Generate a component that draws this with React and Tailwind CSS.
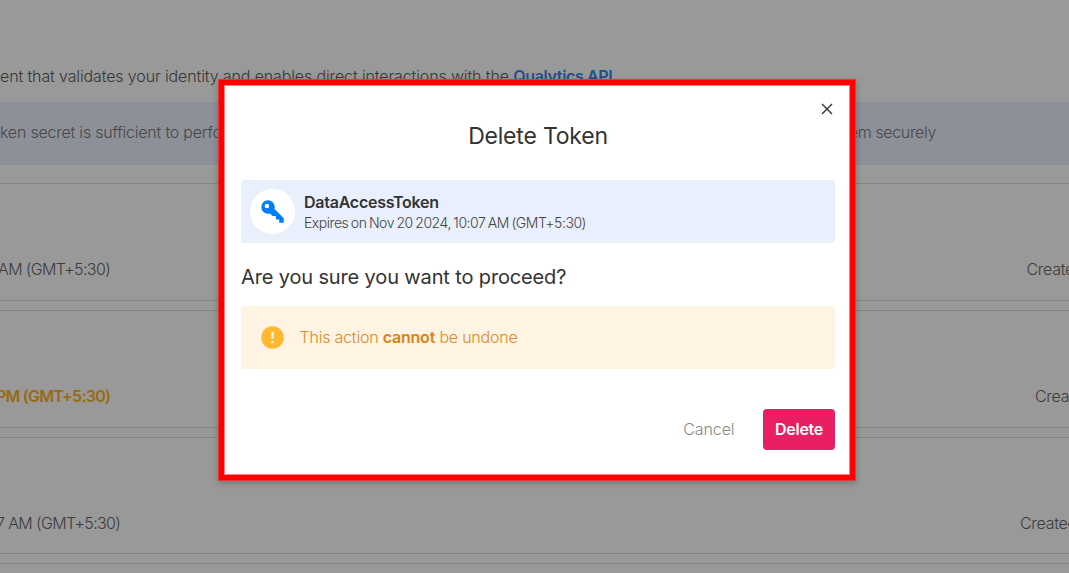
const tokens = [
  { expiry: "AM (GMT+5:30)", created: "Created", warn: false, left: "ml-[-2px]", right: "w-[42.5px]", h: "h-[118px]" },
  { expiry: "PM (GMT+5:30)", created: "Created", warn: true, left: "ml-[-4px]", right: "w-[34px]", h: "h-[118px]" },
  { expiry: "7 AM (GMT+5:30)", created: "Created", warn: false, left: "ml-[-4px]", right: "w-[49px]", h: "h-[117px]" },
];

function TokenRow({ token }) {
  return (
    <div className={`flex shrink-0 items-start justify-between border-y border-[#dedede] pt-[73px] ${token.h}`}>
      <span
        className={`${token.left} leading-6 ${
          token.warn ? "font-semibold tracking-[-0.76px] text-[#ffb020]" : "font-light tracking-[-0.62px] text-[#666]"
        }`}
      >
        {token.expiry}
      </span>
      <span className={`${token.right} font-light leading-6 tracking-[-0.3px] text-[#666]`}>{token.created}</span>
    </div>
  );
}

function Page() {
  return (
    <div className="flex h-full flex-col whitespace-nowrap bg-white text-[16px]">
      <div className="h-[102px] shrink-0 pt-[64px] font-light leading-6 text-[#5c5c5c]">
        <span className="tracking-[-0.13px]">
          ent that validates your identity and enables direct interactions with the{" "}
        </span>
        <span className="font-semibold tracking-[-0.35px] text-[#2b8af0]">Qualytics API</span>
      </div>
      <div className="flex h-[63px] shrink-0 items-center justify-between bg-[#ebf1fd] pr-[133px] pb-[3px] font-light text-[#777]">
        <span className="tracking-[-0.22px]">ken secret is sufficient to perform</span>
        <span className="tracking-[-0.35px]">them securely</span>
      </div>
      <div className="mt-[18px] flex flex-col gap-[9px]">
        {tokens.map((token, i) => (
          <TokenRow key={i} token={token} />
        ))}
        <div className="h-5 border-t border-[#dedede]" />
      </div>
    </div>
  );
}

function KeyIcon() {
  return (
    <svg viewBox="0 0 24 24" className="size-[27px] fill-[#007dfa]">
      <path d="M22 18V22H18V19H15V16H12L9.74 13.74C9.19 13.91 8.61 14 8 14A6 6 0 0 1 2 8A6 6 0 0 1 8 2A6 6 0 0 1 14 8C14 8.61 13.91 9.19 13.74 9.74L22 18M7 5A2 2 0 0 0 5 7A2 2 0 0 0 7 9A2 2 0 0 0 9 7A2 2 0 0 0 7 5Z" />
    </svg>
  );
}

function AlertIcon() {
  return (
    <svg viewBox="0 0 24 24" className="size-[27px] fill-[#ffb931]">
      <path d="M13 13H11V7H13M13 17H11V15H13M12 2A10 10 0 0 0 2 12A10 10 0 0 0 12 22A10 10 0 0 0 22 12A10 10 0 0 0 12 2Z" />
    </svg>
  );
}

function DeleteDialog() {
  return (
    <div className="mt-[79px] ml-[218px] flex h-[402px] w-[638px] flex-col whitespace-nowrap border border-[#e13a3a] bg-[#ff0000] p-[5px] shadow-[0_2px_6px_rgba(0,0,0,0.25)]">
      <div className="flex flex-1 flex-col border border-[#ff8080] bg-white pr-[14px] pl-4 text-[#333]">
        <div className="flex h-[34px] items-start justify-end pt-[17px]">
          <svg viewBox="0 0 12 12" className="mr-[2px] size-3 shrink-0 fill-none stroke-[#333] stroke-[1.4]">
            <path d="M1 1 11 11M11 1 1 11" />
          </svg>
        </div>
        <h1 className="h-8 text-center text-[23px] font-normal leading-8 tracking-[-0.2px]">Delete Token</h1>
        <div className="mt-[28px] flex h-[63px] items-center rounded bg-[#e9effc] pl-[9px]">
          <div className="flex size-[45px] items-center justify-center rounded-full bg-white">
            <KeyIcon />
          </div>
          <div className="ml-[9px] flex flex-col pt-[2px]">
            <span className="text-[16px] font-semibold leading-[21px] tracking-[-0.25px]">DataAccessToken</span>
            <span className="text-[14px] font-light leading-[20px] tracking-[-0.46px] text-[#444] [word-spacing:-1px]">
              Expires on Nov 20 2024, 10:07 AM (GMT+5:30)
            </span>
          </div>
        </div>
        <p className="mt-[19px] h-[30px] text-[20px] leading-[30px] tracking-[-0.14px]">Are you sure you want to proceed?</p>
        <div className="mt-[14px] flex h-[63px] items-center rounded bg-[#fff4e3] pl-[18px] text-[#e08a20]">
          <AlertIcon />
          <p className="ml-[13.5px] pb-px text-[16px] font-light tracking-[-0.21px]">
            This action <b className="font-semibold text-[#db8215]">cannot</b> be undone
          </p>
        </div>
        <div className="mt-10 flex items-center justify-end gap-[28.5px]">
          <button className="pb-[2px] text-[16px] font-light tracking-[-0.1px] text-[#888]">Cancel</button>
          <button className="h-[41px] w-[72px] rounded bg-[#e91e63] pb-[2px] text-[16px] font-semibold tracking-[-0.3px] text-white">
            Delete
          </button>
        </div>
      </div>
    </div>
  );
}

export default function App() {
  return (
    <div className="relative h-[573px] w-[1069px] overflow-hidden font-['Inter','Open_Sans',sans-serif]">
      <Page />
      <div className="absolute inset-0 bg-black/40">
        <DeleteDialog />
      </div>
    </div>
  );
}
